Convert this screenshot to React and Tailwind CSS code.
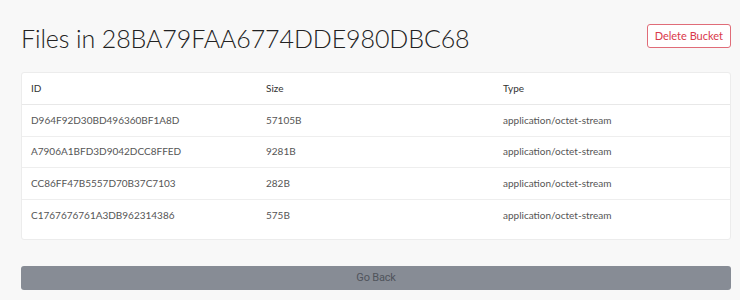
import React from 'react';

const files = [
  { id: 'D964F92D30BD496360BF1A8D', size: '57105B', type: 'application/octet-stream' },
  { id: 'A7906A1BFD3D9042DCC8FFED', size: '9281B', type: 'application/octet-stream' },
  { id: 'CC86FF47B5557D70B37C7103', size: '282B', type: 'application/octet-stream' },
  { id: 'C1767676761A3DB962314386', size: '575B', type: 'application/octet-stream' },
];

const App = () => {
  return (
    <div className="min-h-screen w-[740px] h-[300px] bg-[#f8f8f8] pl-[21px] pr-[9px] pt-[20px] font-['Lato',sans-serif] overflow-hidden">
      {/* Header */}
      <div className="flex items-start justify-between">
        <h1 className="text-[25px] leading-[36px] font-light text-[#222] tracking-[-0.1px]">
          Files in 28BA79FAA6774DDE980DBC68
        </h1>
        <button className="mt-[4px] h-[24px] px-[7px] rounded-[3px] border border-[#e06c78] bg-white text-[11px] text-[#d9394b]">
          Delete Bucket
        </button>
      </div>

      {/* Files table */}
      <div className="mt-[16px] h-[168px] rounded-[3px] border border-[#ececec] bg-white">
        <div className="grid grid-cols-[235px_237px_1fr] h-[32px] items-center border-b border-[#e8e8e8] px-[9px] text-[10px] text-[#333]">
          <span>ID</span>
          <span>Size</span>
          <span>Type</span>
        </div>
        {files.map((file, i) => (
          <div
            key={file.id}
            className={`grid grid-cols-[235px_237px_1fr] h-[31.5px] items-center px-[9px] text-[10px] text-[#555] ${i < files.length - 1 ? 'border-b border-[#eeeeee]' : ''}`}
          >
            <span>{file.id}</span>
            <span>{file.size}</span>
            <span>{file.type}</span>
          </div>
        ))}
      </div>

      {/* Go back */}
      <button className="mt-[26px] w-full h-[24px] rounded-[3px] bg-[#878c95] text-[11px] text-[#50545c] font-['Roboto',sans-serif] tracking-[-0.2px]">
        Go Back
      </button>
    </div>
  );
};

export default App;
